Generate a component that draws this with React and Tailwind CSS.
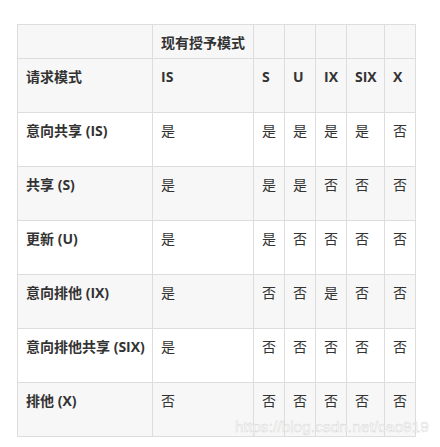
import React from 'react';

const COLS = ['S', 'U', 'IX', 'SIX', 'X'];

const ROWS = [
  { name: '意向共享 (IS)', vals: ['是', '是', '是', '是', '是', '否'] },
  { name: '共享 (S)', vals: ['是', '是', '是', '否', '否', '否'] },
  { name: '更新 (U)', vals: ['是', '是', '否', '否', '否', '否'] },
  { name: '意向排他 (IX)', vals: ['是', '否', '否', '是', '否', '否'] },
  { name: '意向排他共享 (SIX)', vals: ['是', '否', '否', '否', '否', '否'] },
  { name: '排他 (X)', vals: ['否', '否', '否', '否', '否', '否'] },
];

const font = { fontFamily: '"Open Sans", "Noto Sans CJK SC", sans-serif' };

export default function App() {
  return (
    <div className="relative min-h-[447px] bg-white pt-[24px] pl-[17px]" style={font}>
      <div className="grid w-[399px] grid-cols-[134px_100px_30px_30px_30px_37px_30px] gap-px bg-[#dddddd] p-px text-[14px] leading-[22px] text-[#333]">
        {/* header row 1 */}
        <div className="h-[33px] bg-[#f7f7f7]" />
        <div className="h-[33px] whitespace-nowrap bg-[#f7f7f7] pl-[8px] pt-[7px] font-bold">现有授予模式</div>
        {COLS.map(c => (
          <div key={c} className="h-[33px] bg-[#f7f7f7]" />
        ))}

        {/* header row 2 */}
        <div className="h-[53px] bg-[#f7f7f7] pl-[8px] pt-[7px] font-bold">请求模式</div>
        <div className="h-[53px] bg-[#f7f7f7] pl-[8px] pt-[7px] font-bold">IS</div>
        {COLS.map(c => (
          <div key={c} className="h-[53px] whitespace-nowrap bg-[#f7f7f7] pl-[8px] pt-[7px] font-bold">{c}</div>
        ))}

        {ROWS.map((r, i) => {
          const bg = i % 2 === 0 ? 'bg-white' : 'bg-[#f7f7f7]';
          return (
            <React.Fragment key={r.name}>
              <div className={`h-[53px] whitespace-nowrap pl-[8px] pt-[7px] font-bold ${bg}`}>{r.name}</div>
              {r.vals.map((v, j) => (
                <div key={j} className={`h-[53px] pl-[8px] pt-[7px] ${bg}`}>{v}</div>
              ))}
            </React.Fragment>
          );
        })}
      </div>

      {/* watermark */}
      <div
        className="absolute left-[235px] top-[417px] whitespace-nowrap text-[15.5px] leading-[20px] text-[rgba(255,255,255,0.9)]"
        style={{
          fontFamily: '"Liberation Sans", Arial, sans-serif',
          WebkitTextStroke: '0.5px rgba(200,200,200,0.7)',
        }}
      >
        https://blog.csdn.net/cao919
      </div>
    </div>
  );
}
